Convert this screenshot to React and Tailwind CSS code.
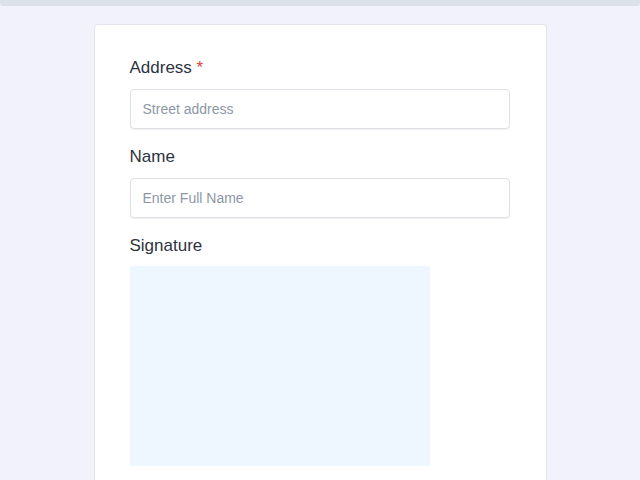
export default function App() {
  return (
    <div className="min-h-screen bg-[#f2f2fc] font-['Liberation_Sans',Arial,sans-serif]">
      <div className="h-[6px] rounded-b-[3px] bg-[#dde1ea]" />
      <div className="mx-auto mt-[18px] w-[453px] rounded-[4px] border border-[#e3e4ec] bg-white px-[35px] pt-[31px] pb-[40px]">
        <div className="flex flex-col gap-[16px]">
          <div>
            <label className="mb-[9px] block text-[17px] leading-[24px] text-[#2d3340]">
              Address <span className="text-[#e03e3e]">*</span>
            </label>
            <input
              className="block h-[40px] w-[380px] rounded-[4px] border border-[#dfe1e6] bg-white px-[12px] text-[14px] text-[#2d3340] shadow-[0_1px_1px_rgba(0,0,0,0.06)] outline-none placeholder:text-[#8e97a6]"
              placeholder="Street address"
            />
          </div>
          <div>
            <label className="mb-[9px] block text-[17px] leading-[24px] text-[#2d3340]">Name</label>
            <input
              className="block h-[40px] w-[380px] rounded-[4px] border border-[#dfe1e6] bg-white px-[12px] text-[14px] text-[#2d3340] shadow-[0_1px_1px_rgba(0,0,0,0.06)] outline-none placeholder:text-[#8e97a6]"
              placeholder="Enter Full Name"
            />
          </div>
          <div>
            <label className="mb-[8px] block text-[17px] leading-[24px] text-[#2d3340]">Signature</label>
            <div className="h-[200px] w-[300px] bg-[#eef6ff]" />
          </div>
        </div>
      </div>
    </div>
  );
}
